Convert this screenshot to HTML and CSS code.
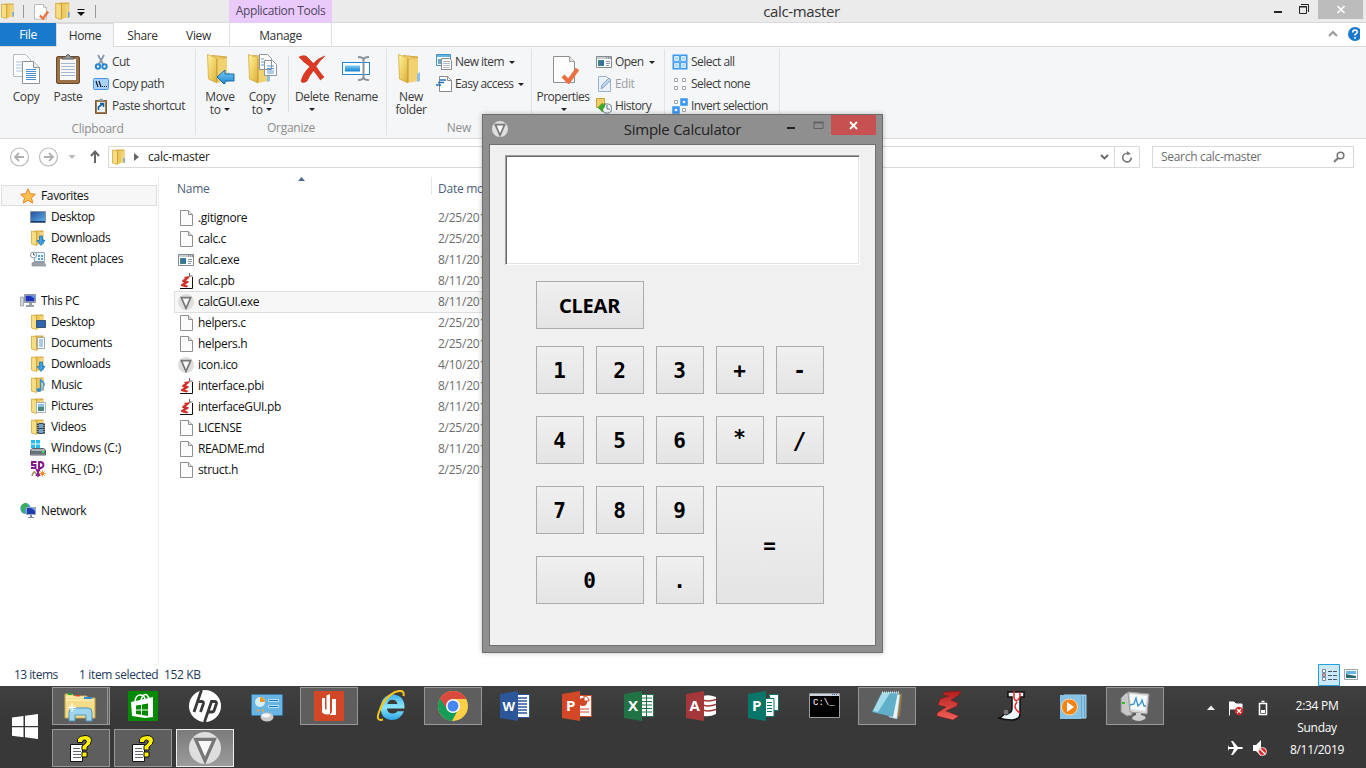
FILE: index.html
```html
<!DOCTYPE html>
<html lang="en">
<head>
<meta charset="utf-8">
<title>calc-master</title>
<link rel="stylesheet" href="styles.css">
</head>
<body>
<svg class="defs" width="0" height="0">
  <defs>
    <linearGradient id="gold" x1="0" x2="1" y1="0" y2="1"><stop offset="0" stop-color="#fff2a8"/><stop offset=".5" stop-color="#f0d265"/><stop offset="1" stop-color="#d9ae3c"/></linearGradient>
    <linearGradient id="goldDark" x1="0" x2="1"><stop offset="0" stop-color="#f8e08a"/><stop offset="1" stop-color="#d8ae48"/></linearGradient>
    <linearGradient id="sky" x1="0" x2="0" y1="0" y2="1"><stop offset="0" stop-color="#7ecdf8"/><stop offset="1" stop-color="#1283cf"/></linearGradient>
    <linearGradient id="ie" x1="0" x2="0" y1="0" y2="1"><stop offset="0" stop-color="#3fb4ea"/><stop offset=".5" stop-color="#8ce6fc"/><stop offset="1" stop-color="#2ba4e4"/></linearGradient>
    <linearGradient id="screen" x1="0" x2="1" y1="0" y2="1"><stop offset="0" stop-color="#1f4f9c"/><stop offset="1" stop-color="#63b3ec"/></linearGradient>
    <linearGradient id="redz" x1="0" x2="0" y1="0" y2="1"><stop offset="0" stop-color="#b41d1a"/><stop offset="1" stop-color="#f0625a"/></linearGradient>
    <symbol id="folder" viewBox="0 0 32 32">
      <path d="M8 3l15 1.500v24H8z" fill="#d2a63f"/><path d="M9 4l13 1.500v21H9z" fill="url(#goldDark)"/>
      <path d="M3.500 2.500L13 6v25L4.500 27z" fill="url(#gold)" stroke="#d6ab3f" stroke-width=".8"/><path d="M13 8l10-2v23l-10 2z" fill="#f0d271"/><path d="M13 7v23" stroke="#b98b2b" stroke-width=".8"/>
      <path d="M22 22l3-2v9l-3 1z" fill="#8fc0ea"/>
    </symbol>
    <symbol id="folder-s" viewBox="0 0 16 16">
      <path d="M4.500.5h9v13.500h-9z" fill="#dcae43"/><path d="M1.500 1l5 1v13.500l-5-1.500z" fill="#f7dd83" stroke="#d3a83f" stroke-width=".8"/><path d="M6.500 2.500L9 1.500h1v12.500l-3.500 1.500z" fill="#edcb62"/><path d="M10 2h3v12h-3z" fill="#f1d57d"/><path d="M6.700 2.500v12" stroke="#b98b2b" stroke-width=".6"/><path d="M12.500 9h1.300v4.500h-1.300z" fill="#4ea4e0"/>
    </symbol>
    <symbol id="page" viewBox="0 0 16 16"><path d="M2.500.5h8l4 4v11h-12z" fill="#fcfcfc" stroke="#8f8f8f"/><path d="M10.500.5v4h4" fill="#e4e4e4" stroke="#8f8f8f"/></symbol>
    <symbol id="props" viewBox="0 0 32 32"><path d="M4.500 4.500h16l5 5v21h-21z" fill="#fdfdfd" stroke="#8f8f8f"/><path d="M20.500 4.500v5h5" fill="#e8e8e8" stroke="#9a9a9a"/><path d="M14 24l5.500 5.500L28.500 17" fill="none" stroke="#ea7042" stroke-width="4.200"/></symbol>
    <symbol id="copy" viewBox="0 0 32 32"><path d="M3.500 2.500h12l5 5v17h-17z" fill="#fff" stroke="#b8bcc2"/><path d="M6 10h8M6 13h7M6 16h7M6 19h7" stroke="#a9c3dd"/><path d="M12.500 9.500h11l6 6v16h-17z" fill="#fff" stroke="#8d949c"/><path d="M23.500 9.500v6h6" fill="#e9edf2" stroke="#8d949c"/><path d="M16 17.500h10M16 19.500h10M16 21.500h10M16 23.500h10M16 25.500h10M16 27.500h10" stroke="#4d8ed0"/></symbol>
    <symbol id="paste" viewBox="0 0 32 32"><rect x="4.500" y="4.500" width="23" height="27" rx="1.500" fill="#9a7148" stroke="#6b4826"/><path d="M8 7h16v21H8z" fill="#f8f8f8"/><path d="M9 11.500h14M9 14.500h14M9 17.500h14M9 20.500h14M9 23.500h14" stroke="#a4b6cd"/><path d="M10 7V5h3.500q2.500-5 5 0H22v2z" fill="#9c9c9c" stroke="#555"/></symbol>
    <symbol id="cut" viewBox="0 0 16 16"><path d="M5 1l5 9M11 1L6 10" stroke="#8b99a8" stroke-width="1.800"/><circle cx="5" cy="12.500" r="2.200" fill="none" stroke="#2286d0" stroke-width="1.900"/><circle cx="11.500" cy="12.500" r="2.200" fill="none" stroke="#2286d0" stroke-width="1.900"/></symbol>
    <symbol id="path" viewBox="0 0 16 16"><rect x=".5" y="2.500" width="15" height="11" rx="1" fill="#a8d2fa" stroke="#4b96e4"/><path d="M3 5l2 6M6 5l2 6" stroke="#111" stroke-width="1.100"/><path d="M9 10.500h1M11 10.500h1M13 10.500h1" stroke="#111"/></symbol>
    <symbol id="shortcut" viewBox="0 0 16 16"><path d="M2.500 2.500h11v13h-11z" fill="#a37a4b" stroke="#7c5a35"/><path d="M4 4h8v10H4z" fill="#eef4fb"/><path d="M5 3q3-5 6 0z" fill="#999"/><path d="M5.500 12V9l4-3M7 5.500h3.500V9" fill="none" stroke="#15629e" stroke-width="1.600"/></symbol>
    <symbol id="moveto" viewBox="0 0 32 32"><use href="#folder" width="32" height="32"/><path d="M13 25l8-7v4h9v7h-9v4z" fill="url(#sky)" stroke="#1c6da7"/></symbol>
    <symbol id="copyto" viewBox="0 0 32 32"><use href="#folder" x="-1" width="32" height="32"/><path d="M13.500 2.500h8l4 4v11h-12zM18.500 8.500h8l4 4v11h-12z" fill="#fff" stroke="#8d949c"/><path d="M21 14h7M21 16.500h7M21 19h7M21 21h7M15 7h3M15 10h3M15 13h3" stroke="#5b98d4"/></symbol>
    <symbol id="delete" viewBox="0 0 32 32"><path d="M3 5q4-2 7-1 4 4 7.500 7.500Q22 6 29 4q-5 4-9 10.500 3.500 5.500 8 10.500l-3.500 3q-3.500-5-7-9.500-4 5-6.500 10.500-5 3-6 0 2-8 9-14.500Q7 10 3 5z" fill="#dc3a22" stroke="#c22f1c" stroke-width=".6"/></symbol>
    <symbol id="rename" viewBox="0 0 32 32"><rect x="2.500" y="10.500" width="27" height="12" fill="#fff" stroke="#2484cf"/><path d="M5 13.500h15v6H5z" fill="url(#sky)"/><path d="M18 5q5.500 0 5.500 3v17q0 3-5.500 3M29 5q-5.500 0-5.500 3v17q0 3 5.500 3" fill="none" stroke="#8a939c" stroke-width="2"/></symbol>
    <symbol id="newitem" viewBox="0 0 16 16"><path d="M.5.5h14v11H.5z" fill="#fff" stroke="#3d94cc"/><path d="M1 1h13v2H1z" fill="#69b4dc"/><path d="M2 5h3v5H2z" fill="#68a8c2"/><path d="M5.500 4.500h8l2 2v9h-10z" fill="#fff" stroke="#8b8b8b"/><path d="M7 7.500h7M7 9.500h7M7 11.500h7M7 13.500h7" stroke="#b4bdc7"/></symbol>
    <symbol id="easy" viewBox="0 0 16 16"><path d="M3.500.5h8l4 4v11h-12z" fill="#fff" stroke="#8b8b8b"/><path d="M11.500.5v4h4" fill="none" stroke="#8b8b8b"/><path d="M4 4h6M2 6.500h6M0 9h5" stroke="#2075bd" stroke-width="1.300"/></symbol>
    <symbol id="app" viewBox="0 0 16 16"><path d="M.5 2.500h15v11H.5z" fill="#fff" stroke="#858b92"/><path d="M1 3h14v2H1z" fill="#c9ced4"/><path d="M10 4h1M12 4h1M14 4h1" stroke="#555"/><path d="M2 6h6v6H2z" fill="#3d8580"/><path d="M4 7h4v4H4z" fill="#356eaa"/><path d="M10 7.500h4M10 9.500h4M10 11.500h3" stroke="#8a9ab0"/></symbol>
    <symbol id="edit" viewBox="0 0 16 16"><path d="M2.500.5h8l4 4v11h-12z" fill="#eaf1fa" stroke="#9db0c9"/><path d="M5 13l1-4 7-7 2 2-7 7z" fill="#c1d5ec" stroke="#8ca4c4"/></symbol>
    <symbol id="history" viewBox="0 0 16 16"><path d="M.5.5h8v9h-8z" fill="#f2cf60" stroke="#c9a33f"/><circle cx="11" cy="10.500" r="4.700" fill="#f6f9fb" stroke="#8c9aa7" stroke-width="1.300"/><path d="M11 7v4h3" stroke="#59748f" fill="none"/><path d="M2 9.500L6.500 5v2.500Q8 7 9 5q.5 4-2.500 6.500V14z" fill="#3bad29" stroke="#228b17" stroke-width=".5"/></symbol>
    <symbol id="selall" viewBox="0 0 16 16"><path d="M.5.5h15v15H.5z" fill="#3797f1"/><path d="M2.500 2.500h4v4h-4zM9.500 2.500h4v4h-4zM2.500 9.500h4v4h-4zM9.500 9.500h4v4h-4z" fill="#b9ddfc" stroke="#d6ebff"/><path d="M8 0v16M0 8h16" stroke="#9fd0fb" stroke-width=".6"/></symbol>
    <symbol id="selnone" viewBox="0 0 16 16"><path d="M2.500 2.500h3v3h-3zM10.500 2.500h3v3h-3zM2.500 10.500h3v3h-3zM10.500 10.500h3v3h-3z" fill="#fff" stroke="#a5a5a5"/></symbol>
    <symbol id="selinv" viewBox="0 0 16 16"><path d="M2.500 2.500h3v3h-3zM10.500 10.500h3v3h-3z" fill="#fff" stroke="#a5a5a5"/><path d="M9.500 1.500h5v5h-5zM1.500 9.500h5v5h-5z" fill="#e5f2ff" stroke="#3797f1" stroke-width="2.500"/></symbol>
    <symbol id="tri" viewBox="0 0 48 48"><circle cx="24" cy="24" r="24" fill="#dedede"/><path d="M10 11h28L24 43z" fill="#f8f8f8" stroke="#777" stroke-width="5"/></symbol>
    <symbol id="pb" viewBox="0 0 16 16"><path d="M2 2h9l3 3v10.500H2" fill="#fff"/><path d="M14.500 4v11.500H2" fill="none" stroke="#111"/><path d="M11.500 0v3h3" fill="none" stroke="#666"/><path d="M6 4l6-1-1 2-3 2.500 3 1-1 1.500-3 1.500 3.500 1.500-2 1.500L3 13v-1.500L6 9.500 4 8.500 4.500 7 7 5.500z" fill="#d2302a"/></symbol>
    <symbol id="star" viewBox="0 0 16 16"><path d="M8 .8l2.200 4.900 5.200.6-3.900 3.500 1.200 5.200L8 12.400l-4.700 2.600 1.200-5.200L.6 6.300l5.200-.6z" fill="#fbc14f" stroke="#e9832a"/></symbol>
    <symbol id="desk" viewBox="0 0 16 16"><path d="M.5 2.500h15v11H.5z" fill="url(#screen)" stroke="#8b95a3"/><path d="M1 12h14v1.500H1z" fill="#1d3c70"/></symbol>
    <symbol id="dl" viewBox="0 0 16 16"><use href="#folder-s" width="16" height="16"/><path d="M9.500 6h3v4.500H15L11 15.500 7 10.500h2.500z" fill="#3aa0e4" stroke="#2375b7" stroke-width=".8"/></symbol>
    <symbol id="recent" viewBox="0 0 16 16"><path d="M4.500 1.500h10v9h-10z" fill="#edf5fb" stroke="#93a9bb"/><path d="M8 4h2v2H8zM11 4h2v2h-2zM8 7h2v2H8zM11 7h2v2h-2z" fill="#58a6de"/><path d="M2 12l2-1h10l2 4H2z" fill="#9ca3aa" stroke="#7c858e" stroke-width=".6"/><circle cx="3.500" cy="4" r="3" fill="#fff" stroke="#8697a5"/><path d="M3.500 2v2H5" stroke="#567" fill="none"/></symbol>
    <symbol id="pc" viewBox="0 0 16 16"><path d="M.5 4h3v9h-3z" fill="#d3d7da" stroke="#7e868c" stroke-width=".6"/><path d="M4.500 1.500h11v8h-11z" fill="#d8dce0" stroke="#8d949a"/><path d="M5.500 2.500h9v6h-9z" fill="#1d36b8"/><path d="M10 2.500h4.500v3z" fill="#5f95f0"/><path d="M9 10h3v2h2v2H6v-2h3z" fill="#9ba1a6"/></symbol>
    <symbol id="fdesk" viewBox="0 0 16 16"><use href="#folder-s" width="16" height="16"/><path d="M6.500 6.500h9v7h-9z" fill="#2c66ae" stroke="#3c5572"/></symbol>
    <symbol id="fdoc" viewBox="0 0 16 16"><use href="#folder-s" width="16" height="16"/><path d="M7.500 2.500h7v11h-7z" fill="#fff" stroke="#9ba6b3"/><path d="M9 5h4M9 7h4M9 9h4M9 11h4" stroke="#5b93cb"/></symbol>
    <symbol id="fmus" viewBox="0 0 16 16"><use href="#folder-s" width="16" height="16"/><path d="M10.500 13V3q4 2 3.500 6" fill="none" stroke="#348bd1" stroke-width="1.500"/><ellipse cx="9" cy="13" rx="2.500" ry="2" fill="#348bd1"/></symbol>
    <symbol id="fpic" viewBox="0 0 16 16"><use href="#folder-s" width="16" height="16"/><path d="M6.500 4.500h9v10h-9z" fill="#fff" stroke="#a8b2ba"/><path d="M8 6h6v3H8z" fill="#85c4e8"/><path d="M8 9h6v4H8z" fill="#45897c"/></symbol>
    <symbol id="fvid" viewBox="0 0 16 16"><use href="#folder-s" width="16" height="16"/><path d="M7 4h8v11H7z" fill="#39414b"/><path d="M9 5h4v4H9zM9 10h4v4H9z" fill="#6ea6d2"/><path d="M8 4v11M14 4v11" stroke="#ddd" stroke-dasharray="1 1"/></symbol>
    <symbol id="drive" viewBox="0 0 16 16"><path d="M1 0h4v3.500H1zM6 0h4v3.500H6zM1 4.500h4V8H1zM6 4.500h4V8H6z" fill="#22bdf2"/><path d="M.5 10l2-1.500h11l2 1.500v5H.5z" fill="#acb2b8" stroke="#596168"/><path d="M1 11h14v3H1z" fill="#667179"/><path d="M12 11h2v2h-2z" fill="#3ce357"/></symbol>
    <symbol id="sd" viewBox="0 0 16 16"><path d="M6.500 1H2v3h3.500v3H1M9 .5V7h2q2.500-1 2.500-3T11 1H8.500" fill="none" stroke="#831489" stroke-width="1.900"/><path d="M6 8l4 7M10 8l-4 7M8 8v8" stroke="#831489" stroke-width="1.500"/><path d="M2 15q2-7 4-2" fill="none" stroke="#9b9260" stroke-width="1.600"/><path d="M12.500 9.500v6M9.500 12.500h6M10.500 10.500l4 4M14.500 10.500l-4 4" stroke="#ed8a26"/></symbol>
    <symbol id="net" viewBox="0 0 16 16"><circle cx="5.500" cy="5.500" r="5.200" fill="#3b9bd8"/><path d="M1 3q4-5 7-2L7 5 4 7l1 4-3-2z" fill="#3bae58"/><path d="M6.500 4.500h9v7h-9z" fill="#1f3cb1" stroke="#9da8bd"/><path d="M11 5h4v3z" fill="#6f9bec"/><path d="M10 12h2v2h2v1H8v-1h2z" fill="#848da2"/></symbol>
    <symbol id="help" viewBox="0 0 22 27"><path d="M.5 9.500h12v17H.5z" fill="#fff" stroke="#111"/><path d="M3 13.500h7M3 16.500h8M3 19.500h8M3 22.500h8" stroke="#666"/><path d="M7.500 7.500V4q2-3.500 7.500-3.500 6 0 6.500 5 0 4-4.500 6.500v3h-5v-4q4.500-2.500 4.500-5-2.500-2.500-4 0v1.500z" fill="#ffef00" stroke="#111"/><path d="M12 17h5v5h-5z" fill="#ffef00" stroke="#111"/></symbol>
  </defs>
</svg>

<div class="explorer">
  <header class="titlebar">
    <div class="quick">
      <svg class="i16"><use href="#folder-s"/></svg><i class="tick"></i>
      <svg class="i18"><use href="#props"/></svg><svg class="i18"><use href="#folder-s"/></svg>
      <svg class="drop" viewBox="0 0 8 7"><path d="M.5.5h7" stroke="#111"/><path d="M0 3h8L4 7z" fill="#111"/></svg><i class="tick"></i>
    </div>
    <div class="apptools">Application Tools</div>
    <div class="wintitle">calc-master</div>
    <svg class="winbtns" viewBox="0 0 96 22"><path d="M4 12h8" stroke="#222" stroke-width="2"/><path d="M29.500 6.500h7v7h-7zM31 4.500h7.500V12M29 7h8" fill="none" stroke="#222"/><path d="M48 0h45v19H48z" fill="#bcbcbc"/><path d="M67.500 6l7 7M74.500 6l-7 7" stroke="#fff" stroke-width="1.700"/></svg>
  </header>
  <nav class="tabs">
    <div class="tab file">File</div><div class="tab home">Home</div><div class="tab share">Share</div><div class="tab view">View</div><div class="tab manage">Manage</div>
    <svg class="tabend" viewBox="0 0 40 23"><path d="M9 13l4-4 4 4" fill="none" stroke="#999" stroke-width="2"/><circle cx="35" cy="11" r="7" fill="#1979ca"/><path d="M32.800 9.500q0-2.500 2.200-2.500t2.200 2q0 1.400-2.200 2.600v1M35 14v1.700" fill="none" stroke="#fff" stroke-width="1.600"/></svg>
  </nav>
  <section class="ribbon">
    <div class="group clip">
      <div class="tools">
        <div class="big"><svg><use href="#copy"/></svg><span>Copy</span></div>
        <div class="big"><svg><use href="#paste"/></svg><span>Paste</span></div>
        <div class="smalls"><div><svg><use href="#cut"/></svg><span>Cut</span></div><div><svg><use href="#path"/></svg><span>Copy path</span></div><div><svg><use href="#shortcut"/></svg><span>Paste shortcut</span></div></div>
      </div><div class="caption">Clipboard</div>
    </div>
    <div class="group org">
      <div class="tools">
        <div class="big"><svg><use href="#moveto"/></svg><span>Move<br>to <b class="dn"></b></span></div>
        <div class="big"><svg><use href="#copyto"/></svg><span>Copy<br>to <b class="dn"></b></span></div>
        <i class="sep"></i>
        <div class="big"><svg><use href="#delete"/></svg><span>Delete<br><b class="dn"></b></span></div>
        <div class="big wide"><svg><use href="#rename"/></svg><span>Rename</span></div>
      </div><div class="caption">Organize</div>
    </div>
    <div class="group new">
      <div class="tools">
        <div class="big"><svg><use href="#folder"/></svg><span>New<br>folder</span></div>
        <div class="smalls"><div><svg><use href="#newitem"/></svg><span>New item</span><b class="dn"></b></div><div><svg><use href="#easy"/></svg><span>Easy access</span><b class="dn"></b></div></div>
      </div><div class="caption">New</div>
    </div>
    <div class="group open">
      <div class="tools">
        <div class="big props"><svg><use href="#props"/></svg><span>Properties<br><b class="dn"></b></span></div>
        <div class="smalls"><div><svg><use href="#app"/></svg><span>Open</span><b class="dn"></b></div><div class="off"><svg><use href="#edit"/></svg><span>Edit</span></div><div><svg><use href="#history"/></svg><span>History</span></div></div>
      </div>
    </div>
    <div class="group select">
      <div class="smalls"><div><svg><use href="#selall"/></svg><span>Select all</span></div><div><svg><use href="#selnone"/></svg><span>Select none</span></div><div><svg><use href="#selinv"/></svg><span>Invert selection</span></div></div>
    </div>
  </section>
  <section class="address">
    <svg class="navs" viewBox="0 0 108 36" fill="none"><g stroke="#b9b9b9" stroke-width="1.200"><circle cx="19.500" cy="18" r="9"/><circle cx="48.500" cy="18" r="9"/></g><g stroke="#b0b0b0" stroke-width="1.800"><path d="M15 18h9M19 14l-4 4 4 4M44 18h9M49 14l4 4-4 4"/></g><path d="M68.500 16h7L72 20z" fill="#bbb"/><path d="M95 24V13M91 17l4-4.500 4 4.500" stroke="#666" stroke-width="2"/></svg>
    <div class="crumb"><svg class="i16"><use href="#folder-s"/></svg><svg class="arrow" viewBox="0 0 5 8"><path d="M0 0l5 4-5 4z" fill="#666"/></svg><span>calc-master</span>
      <svg class="crumbend" viewBox="0 0 36 20"><path d="M3 8l3.500 3.500L10 8" fill="none" stroke="#666" stroke-width="1.800"/><path d="M16.500 0v20" stroke="#d9d9d9"/><path d="M31 6.800A4.300 4.300 0 1 0 33.300 10.500" fill="none" stroke="#777" stroke-width="1.600"/><path d="M29 8V4l4 3z" fill="#777"/></svg></div>
    <div class="search"><span>Search calc-master</span><svg viewBox="0 0 12 12"><circle cx="7.500" cy="4.500" r="3.300" fill="none" stroke="#777" stroke-width="1.600"/><path d="M5 7L1 11" stroke="#777" stroke-width="2"/></svg></div>
  </section>
  <main class="body">
    <aside class="tree">
      <div class="node root sel"><svg><use href="#star"/></svg>Favorites</div>
      <div class="node"><svg><use href="#desk"/></svg>Desktop</div>
      <div class="node"><svg><use href="#dl"/></svg>Downloads</div>
      <div class="node"><svg><use href="#recent"/></svg>Recent places</div>
      <div class="node root gap"><svg><use href="#pc"/></svg>This PC</div>
      <div class="node"><svg><use href="#fdesk"/></svg>Desktop</div>
      <div class="node"><svg><use href="#fdoc"/></svg>Documents</div>
      <div class="node"><svg><use href="#dl"/></svg>Downloads</div>
      <div class="node"><svg><use href="#fmus"/></svg>Music</div>
      <div class="node"><svg><use href="#fpic"/></svg>Pictures</div>
      <div class="node"><svg><use href="#fvid"/></svg>Videos</div>
      <div class="node drv"><svg><use href="#drive"/></svg>Windows (C:)</div>
      <div class="node drv"><svg><use href="#sd"/></svg>HKG_ (D:)</div>
      <div class="node root gap"><svg><use href="#net"/></svg>Network</div>
    </aside>
    <section class="files">
      <div class="head"><span class="hname">Name</span><svg class="sort" viewBox="0 0 7 4"><path d="M0 4l3.500-4L7 4z" fill="#4d6b8c"/></svg><span class="hdate">Date mo</span></div>
      <div class="row"><svg><use href="#page"/></svg><span>.gitignore</span><time>2/25/201</time></div>
      <div class="row"><svg><use href="#page"/></svg><span>calc.c</span><time>2/25/201</time></div>
      <div class="row"><svg><use href="#app"/></svg><span>calc.exe</span><time>8/11/201</time></div>
      <div class="row"><svg><use href="#pb"/></svg><span>calc.pb</span><time>8/11/201</time></div>
      <div class="row on"><svg><use href="#tri"/></svg><span>calcGUI.exe</span><time>8/11/201</time></div>
      <div class="row"><svg><use href="#page"/></svg><span>helpers.c</span><time>2/25/201</time></div>
      <div class="row"><svg><use href="#page"/></svg><span>helpers.h</span><time>2/25/201</time></div>
      <div class="row"><svg><use href="#tri"/></svg><span>icon.ico</span><time>4/10/201</time></div>
      <div class="row"><svg><use href="#pb"/></svg><span>interface.pbi</span><time>8/11/201</time></div>
      <div class="row"><svg><use href="#pb"/></svg><span>interfaceGUI.pb</span><time>8/11/201</time></div>
      <div class="row"><svg><use href="#page"/></svg><span>LICENSE</span><time>2/25/201</time></div>
      <div class="row"><svg><use href="#page"/></svg><span>README.md</span><time>8/11/201</time></div>
      <div class="row"><svg><use href="#page"/></svg><span>struct.h</span><time>2/25/201</time></div>
    </section>
  </main>
  <footer class="status">
    <span class="count">13 items</span><span class="picked">1 item selected</span><span class="size">152 KB</span>
    <svg class="views" viewBox="0 0 48 22"><path d="M.5.5h21v21H.5z" fill="#cbe8f6" stroke="#26a0da"/><g fill="#fff" stroke="#7a8794"><path d="M4.500 5.500h3v3h-3zM4.500 9.500h3v3h-3zM4.500 13.500h3v3h-3z"/></g><path d="M5 11h2" stroke="#c33"/><path d="M10 7.500h4M15 7.500h4M10 11.500h4M15 11.500h4M10 15.500h4M15 15.500h4" stroke="#48566a"/><path d="M26.500 5.500h13v10h-13z" fill="#fff" stroke="#98a4b0"/><path d="M28 7h10v3H28z" fill="#65b6ea"/><path d="M28 10l10 2v2H28z" fill="#286a70"/></svg>
  </footer>
</div>

<div class="taskbar">
  <svg class="start" viewBox="0 0 26 25"><path d="M0 3.500L11.500 2v10H0zM13 1.800L26 0v12H13zM0 13.300h11.500v10L0 21.700zM13 13.300h13V25l-13-1.800z" fill="#fff"/></svg>
  <div class="apps">
    <div class="app run stack"><svg viewBox="0 0 32 32"><path d="M1 4h7l2 2h13v2h8v20H1z" fill="#f4dc88" stroke="#c7a850"/><path d="M4 3h4v2H4z" fill="#16a831"/><path d="M12 5h4v2h-4z" fill="#df3c22"/><path d="M20 7h8v2h-8z" fill="#318ce0"/><path d="M2 10h28M2 7h18" stroke="#fff7c9"/><path d="M5 31V22q0-4 4-4h15q4 0 4 4v9h-6v-6H11v6z" fill="#9ed4ee" stroke="#4b97bb"/><path d="M8 13v9M4 17.500h8M5.500 15l5 5M10.500 15l-5 5" stroke="#fff"/></svg></div>
    <div class="app"><svg viewBox="0 0 32 32"><path d="M1 1h30v30H1z" fill="#008a00"/><path d="M4 12l22-5v20l-8 1L5 26z" fill="#fff"/><path d="M8 11q1-6 5-6t5 4M14 10q2-7 6-5l2 3" fill="none" stroke="#fff" stroke-width="1.500"/><path d="M9 15.500l5-.8v4.800H9zM15 14.500l6-1v6h-6zM9 20.500h5v4.300L9 24zM15 20.500h6v5.500l-6-1z" fill="#008a00"/></svg></div>
    <div class="app"><svg viewBox="0 0 32 32"><circle cx="16" cy="16" r="16" fill="#fff"/><path d="M12.500 0L5 22M9.500 11.500h3q2.500 0 1.800 2.500L11.500 22M15.500 32l7-20.500h3q2.500 0 1.800 2.500l-2 6q-.6 2-2.600 2h-3" fill="none" stroke="#3a3a3a" stroke-width="2.800"/></svg></div>
    <div class="app"><svg viewBox="0 0 32 32"><rect x=".5" y="4.500" width="31" height="21" rx="1" fill="#68b5e4" stroke="#357aa6"/><circle cx="9" cy="12" r="5" fill="#d8eefa"/><path d="M9 12V7a5 5 0 0 1 5 5z" fill="#f39b25"/><path d="M17.500 9.500h10v2h-10zM17.500 15.500h10v2h-10z" fill="#1876bf" stroke="#bde1f5"/><path d="M6 20.500h2M11 20.500h2" stroke="#ffa02e" stroke-width="2"/><ellipse cx="16" cy="27" rx="6.500" ry="4.500" fill="#c9c9c9"/><ellipse cx="15" cy="25.500" rx="4" ry="2" fill="#f5f5f5"/></svg></div>
    <div class="app run"><svg viewBox="0 0 32 32"><path d="M1 1h30v30H1z" fill="#d24726"/><path d="M9 8h3v11l1.500 1V5.500L17 4v19q0 1-2 1.500-5 0-6-2.500zM19 9h4v16h-6.500q3-2.500 2.500-5z" fill="#fff"/></svg></div>
    <div class="app"><svg viewBox="0 0 32 32"><path d="M29.500 18.500H12q.5 5 5.500 5 3.500 0 5-2.200h6.500q-3.500 8.700-12 8.700Q6 29.500 5.500 17.500 6.500 5 18 4.500q12 1 11.500 14M12.200 14h10.300q-1-4.300-5-4.300t-5.300 4.300" fill="url(#ie)" fill-rule="evenodd"/><path d="M8 29.500q-7 2-4.500-6Q8 8 20 2q10-3.500 8.500 4" fill="none" stroke="#f5c51e" stroke-width="2"/></svg></div>
    <div class="app run"><svg viewBox="0 0 32 32"><circle cx="16" cy="16" r="15" fill="#fbd047"/><path d="M16 16L3 8.500A15 15 0 0 0 15 31l6.500-12z" fill="#179b58"/><path d="M16 9h13.200A15 15 0 0 0 3 8.500L10 19z" fill="#db4a3e"/><circle cx="16" cy="16" r="7" fill="#fff"/><circle cx="16" cy="16" r="5.500" fill="#4687f4"/></svg></div>
    <div class="app"><svg viewBox="0 0 32 32"><path d="M17.500 4.500h13v23h-13z" fill="#fff" stroke="#2b579a"/><path d="M19 8h9M19 11h9M19 14h9M19 17h9M19 20h9M19 23h9" stroke="#2b579a" stroke-width="1.300"/><path d="M1 4l18-3v30L1 28z" fill="#2b579a"/><text x="3.500" y="20.500" class="glyph w">W</text></svg></div>
    <div class="app"><svg viewBox="0 0 32 32"><path d="M17.500 5.500h13v21h-13z" fill="#fff" stroke="#d24726"/><circle cx="22" cy="12" r="4" fill="#d24726"/><path d="M23 11V6a5 5 0 0 1 5 5zM19 19h9M19 22h9" stroke="#d24726" fill="#fff"/><path d="M1 4l18-3v30L1 28z" fill="#d24726"/><text x="5" y="21" class="glyph">P</text></svg></div>
    <div class="app"><svg viewBox="0 0 32 32"><path d="M17.500 4.500h13v22h-13z" fill="#fff" stroke="#217346"/><path d="M18 8h11M18 11.500h11M18 15h11M18 18.500h11M18 22h11M23.500 5v21" stroke="#217346"/><path d="M1 4l18-3v30L1 28z" fill="#217346"/><text x="5" y="21" class="glyph">X</text></svg></div>
    <div class="app"><svg viewBox="0 0 32 32"><path d="M18 6q6-2 13 1v17q-5 3-13 2z" fill="#fff"/><path d="M18 10q6 2 13-.5M18 15q6 2 13-.5M18 20q6 2 13-.5" stroke="#a4373a" stroke-width="1.500" fill="none"/><path d="M1 4l18-3v30L1 28z" fill="#a4373a"/><text x="4.500" y="21" class="glyph">A</text></svg></div>
    <div class="app"><svg viewBox="0 0 32 32"><path d="M22 4.500h9.500v16H26z" fill="#fff" stroke="#077568"/><path d="M17 8.500h10v18H17z" fill="#fff" stroke="#077568"/><path d="M20 12.500h5M20 15.500h5M20 18.500h5M20 21.500h5" stroke="#077568"/><path d="M1 4l18-3v30L1 28z" fill="#077568"/><text x="5" y="21" class="glyph">P</text></svg></div>
    <div class="app"><svg viewBox="0 0 32 32"><path d="M.5 3.500h30v24H.5z" fill="#000" stroke="#9b9da2"/><path d="M1 4h29v2H1z" fill="#cfd4dc"/><path d="M23 4.500h6" stroke="#3b5fa8" stroke-dasharray="1 1"/><text x="4" y="14.500" class="cmd">C:\_</text></svg></div>
    <div class="app run"><svg viewBox="0 0 32 32"><path d="M28 3l3 1-2 22-6 3z" fill="#9b7741"/><path d="M25 3l4 2-3 24-8-2z" fill="#e9f5fa" stroke="#8ab" stroke-width=".6"/><path d="M11 2h16l-5 25L1 22z" fill="#5fb0c8"/><path d="M11 3h8L7 22l-5-1z" fill="#a5dce9"/><path d="M11 2.500h17" stroke="#ddd" stroke-width="2" stroke-dasharray="1 1"/></svg></div>
    <div class="app"><svg viewBox="0 0 32 32"><path d="M11 2l17-1-2 4-8 5 7 3-1 3-11 5 13 5-6 4-16-4v-3l9-6-8-2 2-6 9-3-6-1z" fill="url(#redz)" stroke="#7c1714" stroke-width=".6"/></svg></div>
    <div class="app"><svg viewBox="0 0 32 32"><path d="M13 2h16v5h-4v16q0 7-8 7-7 0-13-2 5-2 6-6 1 2 4 1 3-1 3-5V7h-4z" fill="#eef7fc" stroke="#111" stroke-width="1.500"/><path d="M19 1v7q2 6 6-1V2M22 12q-5 6 3 11" fill="none" stroke="#e52929" stroke-width="1.500"/><circle cx="11" cy="22" r="3" fill="#777" stroke="#333"/></svg></div>
    <div class="app"><svg viewBox="0 0 32 32"><path d="M7 5h22v23H7z" fill="#69a9cf" stroke="#a6d5ed"/><path d="M3 5h21v24H3z" fill="#87c3e4"/><path d="M26 5v23" stroke="#b6dff2"/><circle cx="12.500" cy="17" r="8" fill="#f28416" stroke="#ffd6a4"/><path d="M10 12l7 5-7 5z" fill="#fff"/></svg></div>
    <div class="app run"><svg viewBox="0 0 32 32"><path d="M2 8l5-5h6v22l-5 1-6-4z" fill="#c8c8c8" stroke="#888"/><path d="M3 13h3" stroke="#2dc22d" stroke-width="2"/><path d="M9 2l21 2-2 20-17-2z" fill="#d9d9d7" stroke="#999"/><path d="M11 4l17 2-2 15-14-2z" fill="#f5fbff"/><path d="M11 15l4-1 2-6 2 8 3-3 1-3 2 6h2" fill="none" stroke="#3992cc" stroke-width="1.300"/><path d="M17 23h5v2q6 1 4 4-6 4-13 0 0-3 4-4z" fill="#cfcfcf"/></svg></div>
    <div class="app run"><svg class="helpi"><use href="#help"/></svg></div>
    <div class="app run"><svg class="helpi"><use href="#help"/></svg></div>
    <div class="app active"><svg><use href="#tri"/></svg></div>
  </div>
  <svg class="tray" viewBox="0 0 80 82"><path d="M8 24l4-4.500 4 4.500z" fill="#eee"/><path d="M30.500 15.500v14M31 16h4l2 2h6v7h-5l-2-2h-5z" fill="#fff" stroke="#fff"/><circle cx="40" cy="25" r="4.300" fill="#d82727"/><path d="M38 23l4 4M42 23l-4 4" stroke="#fff" stroke-width="1.200"/><path d="M60.500 17.500h7v11h-7zM62.500 15.500h3" fill="none" stroke="#fff" stroke-width="1.500"/><path d="M62 24h4v3h-4z" fill="#fff"/><path d="M30 61h5l-3-6h2l5 6h4q2 1 0 2h-4l-5 6h-2l3-6h-5l-1 2v-6z" fill="#fff"/><path d="M54 59h3l5-5v16l-5-5h-3z" fill="#fff"/><circle cx="63.500" cy="65.500" r="4" fill="#d82727" stroke="#fff" stroke-width=".8"/><path d="M61 63l5 5" stroke="#fff" stroke-width="1.300"/></svg>
  <div class="clock"><span>2:34 PM</span><span>Sunday</span><span>8/11/2019</span></div>
</div>

<div class="calc">
  <div class="calctitle"><svg class="logo"><use href="#tri"/></svg><span>Simple Calculator</span>
    <svg class="calcbtns" viewBox="0 0 92 20"><path d="M3 13h8" stroke="#222" stroke-width="2"/><path d="M30 7.500h9v6h-9z" fill="none" stroke="#626262"/><path d="M29.500 7.500h10" stroke="#626262" stroke-width="2"/><path d="M47 0h45v20H47z" fill="#c75050"/><path d="M66 7l7 7M73 7l-7 7" stroke="#fff" stroke-width="1.800"/></svg></div>
  <div class="client">
    <div class="display"></div>
    <div class="clearrow"><button class="clear">CLEAR</button></div>
    <div class="keys"><button>1</button><button>2</button><button>3</button><button>+</button><button>-</button><button>4</button><button>5</button><button>6</button><button class="star">*</button><button class="div">/</button><button>7</button><button>8</button><button>9</button><button class="eq">=</button><button class="zero">0</button><button>.</button></div>
  </div>
</div>
</body>
</html>
```
FILE: styles.css
```css
* { box-sizing: border-box; }
body { margin: 0; width: 1366px; height: 768px; overflow: hidden; background: #fff; color: #1a1a1a; font: 12px/16px "Open Sans", "Noto Sans", sans-serif; letter-spacing: -.35px; }
svg { display: block; flex: none; }
.defs { position: absolute; }
.explorer { height: 686px; display: flex; flex-direction: column; background: #fff; }
.i16 { width: 16px; height: 16px; }
.i18 { width: 18px; height: 18px; }

.titlebar { height: 23px; flex: none; display: flex; background: #ebebeb; border-bottom: 1px solid #d9d9d9; }
.quick { width: 229px; display: flex; align-items: center; gap: 4px; }
.tick { width: 1px; height: 13px; background: #999; margin: 0 4px 0 3px; }
.drop { width: 8px; height: 7px; margin: 3px 6px 0 1px; }
.quick .tick:last-child { margin-left: 0; }
.apptools { width: 103px; height: 23px; background: #e9cafa; color: #4f4660; text-align: center; line-height: 21px; }
.wintitle { width: 939px; text-align: center; font-size: 15px; line-height: 23px; color: #333; }
.winbtns { width: 96px; height: 22px; margin-left: -1px; }

.tabs { height: 24px; flex: none; display: flex; border-bottom: 1px solid #d9dadb; line-height: 26px; text-align: center; color: #333; }
.tab { height: 23px; }
.file { width: 56px; background: #1979ca; color: #fff; line-height: 24px; }
.home { width: 58px; height: 24px; background: #f5f6f7; border: solid #d9dadb; border-width: 1px 1px 0; line-height: 24px; }
.share { width: 57px; }
.view { width: 55px; }
.manage { width: 103px; margin-left: 3px; border: solid #dedede; border-width: 0 1px; }
.tabend { width: 40px; height: 23px; margin-left: auto; margin-right: 6px; }

.ribbon { height: 92px; flex: none; display: flex; background: #f5f6f7; border-bottom: 1px solid #d9dadb; color: #3b3b3b; }
.group { display: flex; flex-direction: column; margin: 2px 0 3px; border-right: 1px solid #e2e3e4; padding-top: 2px; }
.clip { width: 196px; } .org { width: 191px; } .new { width: 145px; } .open { width: 133px; } .select { width: 115px; padding-left: 7px; }
.tools { display: flex; height: 69px; }
.clip .tools { padding-left: 5px; } .org .tools, .new .tools { padding-left: 3px; }
.big { width: 42px; display: flex; flex-direction: column; align-items: center; text-align: center; line-height: 13px; }
.big svg { width: 32px; height: 32px; margin-top: 1px; margin-bottom: 6px; }
.big.wide { width: 46px; }
.big.props { width: 62px; letter-spacing: -.5px; }
.props svg { margin-left: 4px; }
.sep { width: 1px; height: 56px; margin: 5px 2px 0 5px; background: #dddedf; }
.smalls { padding-left: 4px; letter-spacing: -.55px; }
.open .smalls { padding-left: 2px; }
.select .smalls { padding-left: 0; }
.smalls div { display: flex; align-items: center; height: 22px; gap: 3px; white-space: nowrap; }
.smalls svg { width: 16px; height: 16px; }
.dn { display: inline-block; border: 3px solid transparent; border-top-color: #222; border-bottom: 0; margin-left: 1px; vertical-align: 3px; }
.smalls .dn { margin-left: 2px; }
.off { color: #9b9fa5; }
.caption { text-align: center; color: #8d8d8d; line-height: 18px; margin-top: 3px; letter-spacing: -.25px; }

.address { height: 38px; flex: none; display: flex; letter-spacing: -.25px; }
.navs { width: 108px; height: 36px; }
.crumb { width: 1032px; height: 22px; margin-top: 7px; border: 1px solid #d9d9d9; display: flex; align-items: center; padding-left: 2px; color: #222; }
.arrow { width: 5px; height: 8px; margin: 0 9px 0 7px; }
.crumbend { width: 36px; height: 20px; margin-left: auto; margin-right: 5px; }
.search { width: 202px; height: 22px; margin: 7px 0 0 12px; border: 1px solid #d9d9d9; padding: 0 8px; display: flex; align-items: center; justify-content: space-between; color: #6d6d6d; letter-spacing: -.3px; }
.search svg { width: 12px; height: 12px; }

.body { height: 487px; flex: none; display: flex; color: #111; }
.tree { width: 159px; padding: 8px 0 0 1px; border-right: 1px solid #eee; }
.node { height: 21px; display: flex; align-items: center; gap: 5px; padding-left: 29px; line-height: 20px; }
.node svg { width: 16px; height: 16px; }
.root { padding-left: 19px; }
.root.gap { margin-top: 21px; }
.drv { letter-spacing: -.15px; }
.sel { width: 156px; padding-left: 18px; background: #f7f7f7; border: 1px solid #dedede; }
.files { flex: 1; }
.head { height: 30px; display: flex; color: #4c607a; line-height: 24px; padding-left: 18px; letter-spacing: -.25px; }
.hname { width: 121px; }
.sort { width: 7px; height: 4px; }
.hdate { height: 18px; margin-left: 126px; padding-left: 6px; border-left: 1px solid #e7e7e7; }
.row { height: 21px; margin-left: 15px; display: flex; align-items: center; padding-left: 4px; }
.row svg { width: 16px; height: 16px; margin-right: 4px; }
.row span { width: 240px; }
.row time { color: #6d6d6d; letter-spacing: -.25px; }
.row.on { width: 600px; height: 22px; margin-bottom: -1px; background: #f7f7f7; border: 1px solid #dedede; padding-left: 3px; }

.status { height: 22px; flex: none; display: flex; align-items: center; padding: 0 0 0 14px; color: #1e395b; }
.status span { line-height: 22px; white-space: nowrap; }
.count { letter-spacing: -.5px; width: 65px; }
.picked { width: 85px; }
.size { width: 46px; }
.views { width: 48px; height: 22px; margin-left: auto; }

.taskbar { height: 82px; display: flex; background: linear-gradient(#404040, #383838 40%); color: #fff; }
.start { width: 26px; height: 25px; margin: 28px 14px 0 12px; }
.apps { display: grid; grid-template-columns: repeat(18, 58px); grid-template-rows: 38px 38px; gap: 4px; padding-top: 1px; }
.app { display: flex; align-items: center; justify-content: center; height: 38px; }
.app svg { width: 32px; height: 32px; }
.app .helpi { width: 22px; height: 27px; }
.run { background: #5e5e5e; border: 1px solid #979797; }
.stack { border-right: 3px double #979797; }
.active { background: linear-gradient(#7b7b7b, #9b9b9b); border: 1px solid #efefef; }
.glyph { font: 700 15px "Open Sans", sans-serif; fill: #fff; letter-spacing: 0; }
.glyph.w { font-size: 13px; }
.cmd { font: 400 9px "Liberation Mono", monospace; fill: #fff; letter-spacing: 0; }
.tray { width: 80px; height: 82px; margin-left: 35px; }
.clock { width: 76px; display: flex; flex-direction: column; padding-top: 9px; text-align: center; line-height: 22px; letter-spacing: -.3px; }

/* calculator floats over the explorer window */
.calc { position: absolute; left: 482px; top: 114px; width: 401px; height: 539px; background: #8f8f8f; border: 1px solid #6e6e6e; box-shadow: 0 0 5px rgba(0,0,0,.25); }
.calctitle { height: 29px; display: flex; }
.logo { width: 16px; height: 16px; margin: 6px 0 0 9px; }
.calctitle span { width: 281px; padding-left: 68px; text-align: center; font-size: 15px; line-height: 29px; color: #222; letter-spacing: -.25px; }
.calcbtns { width: 92px; height: 20px; margin-left: -5px; }
.client { width: 387px; height: 502px; margin-left: 6px; border: 1px solid #707070; background: #f0f0f0; padding: 10px 0 0 15px; }
.display { width: 355px; height: 110px; background: #fff; border: 1px solid #fff; border-top-color: #a0a0a0; border-left-color: #a0a0a0; box-shadow: inset 1px 1px #696969, inset -1px -1px #e3e3e3; }
.clearrow { padding: 16px 0 17px 31px; }
.keys { display: grid; grid-template-columns: repeat(5, 48px); grid-template-rows: repeat(4, 48px); gap: 22px 12px; padding-left: 31px; }
button { display: flex; align-items: center; justify-content: center; width: 100%; height: 100%; padding: 2px 1px 0 0; border: 1px solid #acacac; background: linear-gradient(#f0f0f0, #e4e4e4); color: #000; font: 700 21px/24px "DejaVu Sans Mono", monospace; letter-spacing: 0; }
.clear { width: 108px; height: 48px; font: 700 20px/24px "Noto Sans", sans-serif; letter-spacing: -.2px; }
.star { padding-bottom: 4px; padding-top: 0; }
.div { font-size: 23px; }
.eq { grid-column: 4 / 6; grid-row: 3 / 5; }
.zero { grid-column: 1 / 3; }
```
